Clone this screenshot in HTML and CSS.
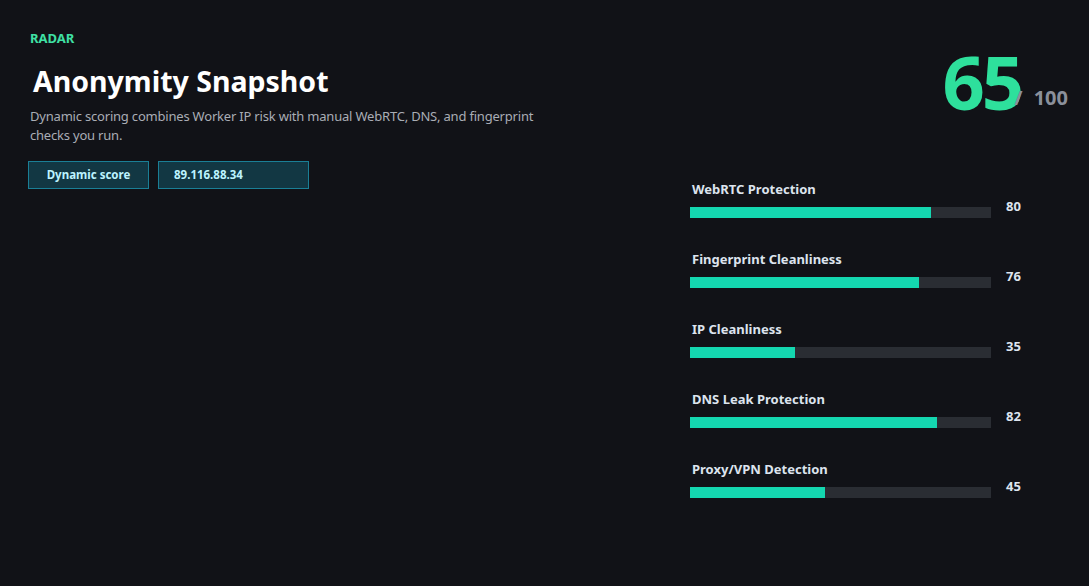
FILE: index.html
```html
<!DOCTYPE html>
<html lang="en">
<head>
    <meta charset="UTF-8">
    <meta name="viewport" content="width=device-width, initial-scale=1.0">
    <title>Anonymity Snapshot</title>
    <link rel="stylesheet" href="styles.css">
</head>
<body>
    <main class="snapshot">
        <section class="intro">
            <p class="eyebrow">RADAR</p>
            <h1>Anonymity Snapshot</h1>
            <p class="desc">Dynamic scoring combines Worker IP risk with manual WebRTC, DNS, and fingerprint checks you run.</p>
            <div class="chips">
                <span class="chip">Dynamic score</span>
                <span class="chip chip-ip">89.116.88.34</span>
            </div>
        </section>

        <section class="result">
            <div class="score">
                <span class="score-num">65</span><span class="score-max">/ 100</span>
            </div>

            <div class="metrics">
                <div class="metric">
                    <span class="metric-name">WebRTC Protection</span>
                    <div class="track"><div class="fill" style="width: 80%"></div></div>
                    <span class="metric-val">80</span>
                </div>
                <div class="metric">
                    <span class="metric-name">Fingerprint Cleanliness</span>
                    <div class="track"><div class="fill" style="width: 76%"></div></div>
                    <span class="metric-val">76</span>
                </div>
                <div class="metric">
                    <span class="metric-name">IP Cleanliness</span>
                    <div class="track"><div class="fill" style="width: 35%"></div></div>
                    <span class="metric-val">35</span>
                </div>
                <div class="metric">
                    <span class="metric-name">DNS Leak Protection</span>
                    <div class="track"><div class="fill" style="width: 82%"></div></div>
                    <span class="metric-val">82</span>
                </div>
                <div class="metric">
                    <span class="metric-name">Proxy/VPN Detection</span>
                    <div class="track"><div class="fill" style="width: 45%"></div></div>
                    <span class="metric-val">45</span>
                </div>
            </div>
        </section>
    </main>
</body>
</html>
```

FILE: styles.css
```css
*{
    margin: 0;
    padding: 0;
    box-sizing: border-box;
}
body{
    background-color: #111217;
    color: #fff;
    font-family: "Noto Sans", "Open Sans", sans-serif;
    height: 586px;
}
.snapshot{
    display: flex;
    justify-content: space-between;
    padding: 30px 21px 0 30px;
}
.intro{
    width: 560px;
}
.eyebrow{
    color: #3fe0a4;
    font-size: 13px;
    font-weight: 700;
    line-height: 16px;
}
h1{
    margin-top: 17px;
    padding-left: 3px;
    font-size: 28.5px;
    font-weight: 700;
    line-height: 36px;
}
.desc{
    margin-top: 8px;
    max-width: 540px;
    color: #a9adb5;
    font-size: 13px;
    letter-spacing: -0.2px;
    line-height: 19px;
}
.chips{
    display: flex;
    gap: 9px;
    margin-top: 16px;
    margin-left: -2px;
}
.chip{
    display: inline-block;
    width: 121px;
    height: 28px;
    border: 1px solid #1a7f96;
    background-color: #123743;
    color: #bdf3ff;
    font-size: 11.5px;
    font-weight: 700;
    line-height: 26px;
    text-align: center;
}
.chip-ip{
    width: 151px;
    padding: 0 15px;
    text-align: left;
}
.result{
    width: 378px;
    display: flex;
    flex-direction: column;
}
.score{
    text-align: right;
    margin-top: 14px;
    line-height: 76px;
}
.score-num{
    color: #2ee09c;
    font-size: 74px;
    font-weight: 700;
    letter-spacing: -3px;
}
.score-max{
    margin-left: -7px;
    vertical-align: 5px;
    color: #8b909b;
    font-size: 20px;
    font-weight: 700;
    word-spacing: 6px;
}
.metrics{
    margin-top: 38px;
    width: 340px;
    display: flex;
    flex-direction: column;
    gap: 32px;
}
.metric{
    display: grid;
    grid-template-columns: 301px auto;
    column-gap: 15px;
    row-gap: 9px;
}
.metric-name{
    grid-column: 1 / 3;
    padding-left: 2px;
    color: #dde4ee;
    font-size: 13px;
    font-weight: 700;
    line-height: 18px;
}
.track{
    height: 11px;
    background-color: #2a2d33;
}
.fill{
    height: 100%;
    background-color: #14d7b0;
}
.metric-val{
    margin-top: -10px;
    color: #dde4ee;
    font-size: 13px;
    font-weight: 700;
    line-height: 18px;
}
```
